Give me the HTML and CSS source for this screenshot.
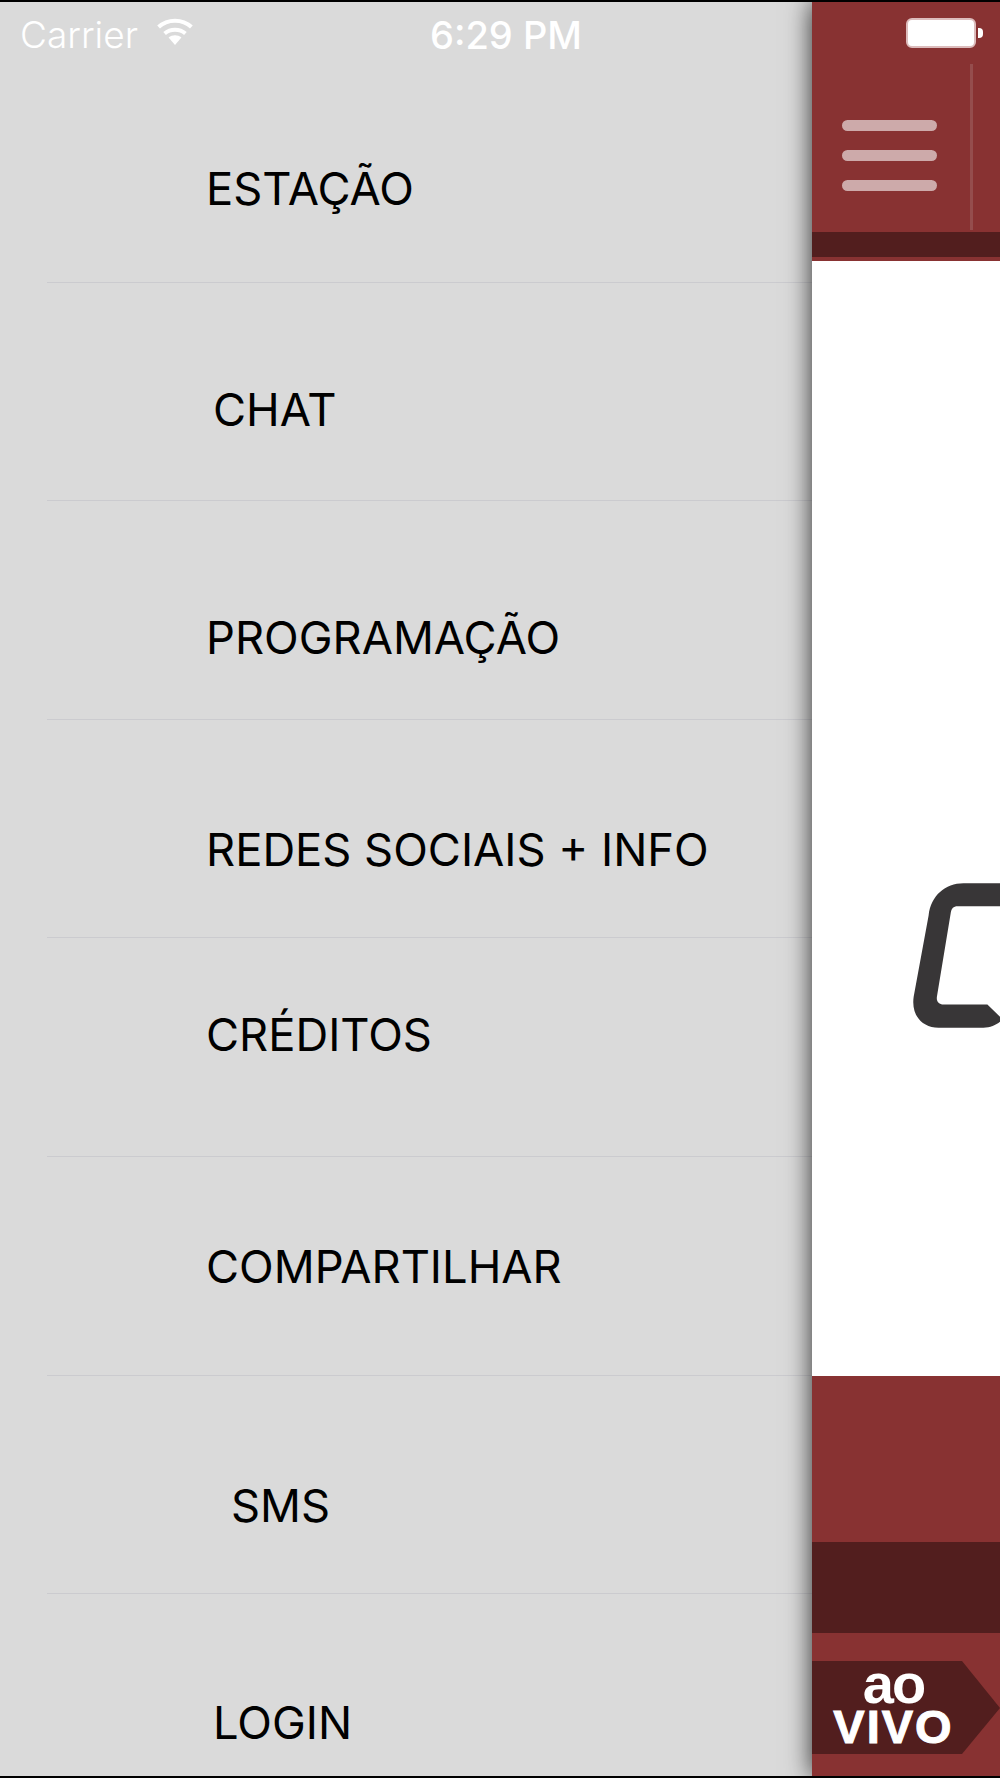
FILE: index.html
```html
<!DOCTYPE html>
<html>
<head>
    <title>Menu</title>
    <link rel="stylesheet" href="styles.css">
</head>
<body>
<div class="screen">
    <!-- Side menu -->
    <div class="drawer">
        <div class="status-bar">
            <span class="carrier">Carrier</span>
            <svg class="wifi" viewBox="0 0 38 28" width="38" height="28">
                <path d="M19 27 L12.6 19.6 C16.2 16.6 21.8 16.6 25.4 19.6 Z" fill="#fff"/>
                <path d="M8.6 15.4 C14.4 10.4 23.6 10.4 29.4 15.4" fill="none" stroke="#fff" stroke-width="4"/>
                <path d="M2.6 9 C11.6 0.6 26.4 0.6 35.4 9" fill="none" stroke="#fff" stroke-width="4"/>
            </svg>
            <span class="clock">6:29 PM</span>
        </div>
        <ul class="menu">
            <li class="menu-item item-estacao"><a>ESTAÇÃO</a></li>
            <li class="menu-item item-chat"><a>CHAT</a></li>
            <li class="menu-item item-programacao"><a>PROGRAMAÇÃO</a></li>
            <li class="menu-item item-redes"><a>REDES SOCIAIS + INFO</a></li>
            <li class="menu-item item-creditos"><a>CRÉDITOS</a></li>
            <li class="menu-item item-compartilhar"><a>COMPARTILHAR</a></li>
            <li class="menu-item item-sms"><a>SMS</a></li>
            <li class="menu-item item-login"><a>LOGIN</a></li>
        </ul>
    </div>

    <!-- Main view, pushed to the right by the menu -->
    <div class="main">
        <div class="header">
            <div class="battery-row">
                <div class="battery"></div>
                <div class="battery-nub"></div>
            </div>
            <div class="nav-row">
                <div class="hamburger">
                    <span class="bar"></span>
                    <span class="bar"></span>
                    <span class="bar"></span>
                </div>
                <div class="nav-divider"></div>
            </div>
            <div class="header-band"></div>
        </div>
        <div class="content">
            <svg class="logo" viewBox="398 128 262 435" width="87" height="145">
                <path d="M660 128 L550 128 C495 128 452 165 445 225 L400 470 C392 525 425 563 475 563 L610 563 C630 563 648 555 660 545 L660 530 L622 493 L490 493 C476 493 468 484 470 470 L512 215 C514 204 520 197 532 197 L660 197 Z" fill="#383637"/>
            </svg>
        </div>
        <div class="player">
            <div class="player-band"></div>
            <div class="live-tag">
                <span class="live-ao">ao</span>
                <span class="live-vivo">VIVO</span>
            </div>
        </div>
    </div>
</div>
</body>
</html>
```
FILE: styles.css
```css
html, body {
    margin: 0;
    padding: 0;
    overflow: hidden;
    background-color: #000;
}

.screen {
    display: flex;
    height: 1774px;
    margin: 2px 0;
    overflow: hidden;
    font-family: Inter, "Noto Sans", sans-serif;
    background-color: #dadada;
}

/* Side menu */
.drawer {
    width: 812px;
    flex-shrink: 0;
}

.status-bar {
    display: flex;
    align-items: center;
    height: 62px;
    padding-left: 20px;
    color: #fff;
}

.carrier {
    font-size: 37px;
    font-weight: 300;
    margin-top: 3px;
}

.wifi {
    margin: 0 0 2px 18px;
}

.clock {
    margin-left: 236px;
    font-size: 38px;
    font-weight: 500;
    margin-top: 3px;
}

.menu {
    list-style: none;
    margin: 0;
    padding: 0 0 0 47px;
}

.menu-item {
    height: 217.6px;
    border-bottom: 1px solid #cbcbcf;
    font-size: 45.3px;
    line-height: 54px;
    color: #000;
    white-space: nowrap;
}

.menu-item a {
    display: block;
    padding-left: 159px;
}

.item-estacao a { padding-top: 98px; }
.item-chat a { padding-top: 100px; padding-left: 166px; }
.item-programacao a { padding-top: 110px; }
.item-redes a { padding-top: 103px; }
.item-creditos a { padding-top: 70px; }
.item-compartilhar a { padding-top: 83px; }
.item-sms a { padding-top: 103px; padding-left: 184px; }
.item-login a { padding-top: 102px; padding-left: 166px; }
.item-login { border-bottom: none; }

/* Main view */
.main {
    flex: 1;
    display: flex;
    flex-direction: column;
    min-width: 0;
    position: relative;
    box-shadow: 0 0 24px rgba(0, 0, 0, 0.8);
}

.header {
    background-color: #883232;
    height: 259px;
    flex-shrink: 0;
}

.battery-row {
    display: flex;
    align-items: center;
    height: 62px;
    padding-left: 94px;
}

.battery {
    box-sizing: border-box;
    width: 70px;
    height: 30px;
    background-color: #fff;
    border: 2px solid #dcbcbc;
    border-radius: 6px;
}

.battery-nub {
    width: 5px;
    height: 10px;
    margin-left: 2px;
    background-color: #fff;
    border-radius: 0 4px 4px 0;
}

.nav-row {
    display: flex;
    height: 168px;
}

.hamburger {
    display: flex;
    flex-direction: column;
    gap: 19px;
    width: 95px;
    margin: 56px 0 0 30px;
    filter: blur(0.6px);
}

.bar {
    display: block;
    height: 11px;
    border-radius: 6px;
    background-color: #cdaaaa;
}

.nav-divider {
    width: 3px;
    height: 166px;
    margin-left: 33px;
    background-color: #954d4d;
    filter: blur(0.6px);
}

.header-band {
    height: 25px;
    background-color: #521e1e;
}

.content {
    flex: 1;
    padding: 622px 0 0 101px;
    overflow: hidden;
    background-color: #fff;
}

.logo {
    display: block;
}

.player {
    height: 400px;
    flex-shrink: 0;
    padding-top: 166px;
    box-sizing: border-box;
    background-color: #883232;
}

.player-band {
    height: 91px;
    background-color: #521e1e;
}

.live-tag {
    display: flex;
    flex-direction: column;
    align-items: center;
    width: 188px;
    height: 93px;
    margin-top: 28px;
    padding-right: 25px;
    box-sizing: border-box;
    background-color: #521e1e;
    clip-path: polygon(0 0, 150px 0, 188px 47px, 150px 93px, 0 93px);
    color: #fff;
    font-family: "Liberation Sans", Arial, sans-serif;
    font-weight: bold;
}

.live-ao {
    font-size: 56px;
    line-height: 48px;
    letter-spacing: -2px;
    margin-top: -1px;
}

.live-vivo {
    font-size: 47px;
    line-height: 38px;
    letter-spacing: 2px;
    -webkit-text-stroke: 1px #fff;
}
```
